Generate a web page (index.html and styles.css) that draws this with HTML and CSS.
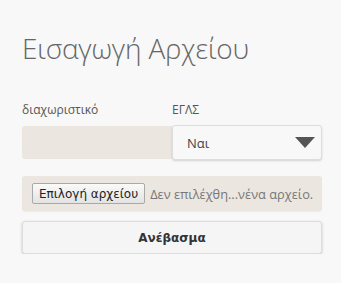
FILE: index.html
```html
<!DOCTYPE html>
<html lang="el">
<head>
  <meta charset="UTF-8">
  <meta name="viewport" content="width=device-width, initial-scale=1.0">
  <title>Εισαγωγή Αρχείου</title>
  <link rel="stylesheet" href="styles.css">
</head>
<body>
  <div class="container">
    <h2>Εισαγωγή Αρχείου</h2>
    <div class="row">
      <div class="field">
        <label>διαχωριστικό</label>
        <input type="text" class="text-input">
      </div>
      <div class="field">
        <label>ΕΓΛΣ</label>
        <div class="select">
          <span>Ναι</span>
          <svg class="arrow" width="20" height="11" viewBox="0 0 20 11"><polygon points="0,0 20,0 10,11" fill="#555"/></svg>
        </div>
      </div>
    </div>
    <div class="file-row">
      <button class="file-btn">Επιλογή αρχείου</button>
      <span class="file-name">Δεν επιλέχθη...νένα αρχείο.</span>
    </div>
    <button class="upload">Ανέβασμα</button>
  </div>
</body>
</html>
```

FILE: styles.css
```css
body { margin: 0; background: #f8f8f8; font-family: "Open Sans", sans-serif; color: #555; }
.container { width: 300px; padding: 28px 0 0 22px; }
h2 { margin: 0; font-weight: 300; font-size: 28px; color: #666; line-height: 40px; letter-spacing: -0.2px; }
.row { display: flex; margin-top: 34px; }
.field { display: flex; flex-direction: column; }
.field:first-child { width: 150px; }
.field:last-child { width: 150px; }
label { font-size: 12px; line-height: 16px; color: #555; margin-bottom: 7px; }
.text-input { box-sizing: border-box; width: 150px; height: 33px; margin-top: 1px; border: none; background: #ebe6df; border-radius: 3px 0 0 3px; }
.select { box-sizing: border-box; height: 35px; display: flex; align-items: center; justify-content: space-between; padding: 0 6px 0 14px; background: #f8f8f8; border: 1px solid #ddd; border-radius: 3px; box-shadow: 0 1px 2px rgba(0, 0, 0, 0.15); font-size: 13px; color: #444; }
.arrow { display: block; }
.file-row { display: flex; align-items: center; box-sizing: border-box; height: 35px; margin-top: 16px; padding: 0 10px; background: #ebe6df; border-radius: 3px; box-shadow: 0 1px 1px rgba(0, 0, 0, 0.05); overflow: hidden; }
.file-btn { flex-shrink: 0; white-space: nowrap; font-family: "DejaVu Sans", sans-serif; font-size: 12px; height: 21px; padding: 0 6px; border: 1px solid #a9a9a9; border-radius: 2px; background: linear-gradient(#fafafa, #e3e3e3); color: #222; }
.file-name { margin-left: 5px; font-size: 12.8px; color: #777; white-space: nowrap; }
.upload { display: block; box-sizing: border-box; width: 300px; height: 33px; margin-top: 10px; border: 1px solid #ddd; border-radius: 3px; background: #f5f5f5; box-shadow: 0 1px 3px rgba(0, 0, 0, 0.2); font-family: "DejaVu Sans", sans-serif; font-weight: bold; font-size: 12px; color: #333; }
```
